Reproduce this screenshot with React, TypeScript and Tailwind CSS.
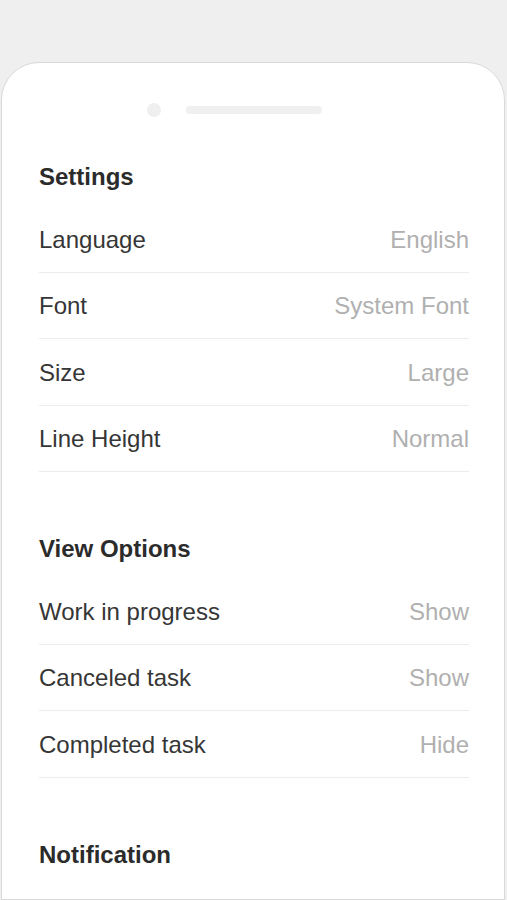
import React from "react";

type Row = { label: string; value: string };

const sections: { title: string; rows: Row[] }[] = [
  {
    title: "Settings",
    rows: [
      { label: "Language", value: "English" },
      { label: "Font", value: "System Font" },
      { label: "Size", value: "Large" },
      { label: "Line Height", value: "Normal" },
    ],
  },
  {
    title: "View Options",
    rows: [
      { label: "Work in progress", value: "Show" },
      { label: "Canceled task", value: "Show" },
      { label: "Completed task", value: "Hide" },
    ],
  },
  {
    title: "Notification",
    rows: [],
  },
];

export default function App() {
  return (
    <div
      className="h-[900px] w-full overflow-hidden bg-[#efefef] pt-[62px] pl-[1px] pr-[2px]"
      style={{ fontFamily: '"Liberation Sans", Arial, sans-serif' }}
    >
      <div className="h-[838px] rounded-t-[38px] border border-[#d9d9d9] bg-white overflow-hidden">
        <div className="h-[85px] pt-[40px] pl-[145px]">
          <div className="flex items-center gap-[25px] h-[14px]">
            <div className="w-[14px] h-[14px] rounded-full bg-[#efefef]" />
            <div className="w-[136px] h-[8px] rounded-full bg-[#f0f0f0]" />
          </div>
        </div>
        <div className="pl-[37px] pr-[35px]">
          {sections.map((s, i) => (
            <div key={s.title} className={i > 0 ? "mt-[48px]" : ""}>
              <div className="h-[58px] flex items-center text-[24px] font-bold text-[#2b2b2b]">
                {s.title}
              </div>
              {s.rows.map((r) => (
                <div
                  key={r.label}
                  className="h-[66.5px] pt-[2px] flex items-center justify-between border-b border-[#ececec] text-[24px]"
                >
                  <span className="text-[#363636]">{r.label}</span>
                  <span className="text-[#b0b0b0]">{r.value}</span>
                </div>
              ))}
            </div>
          ))}
        </div>
      </div>
    </div>
  );
}
